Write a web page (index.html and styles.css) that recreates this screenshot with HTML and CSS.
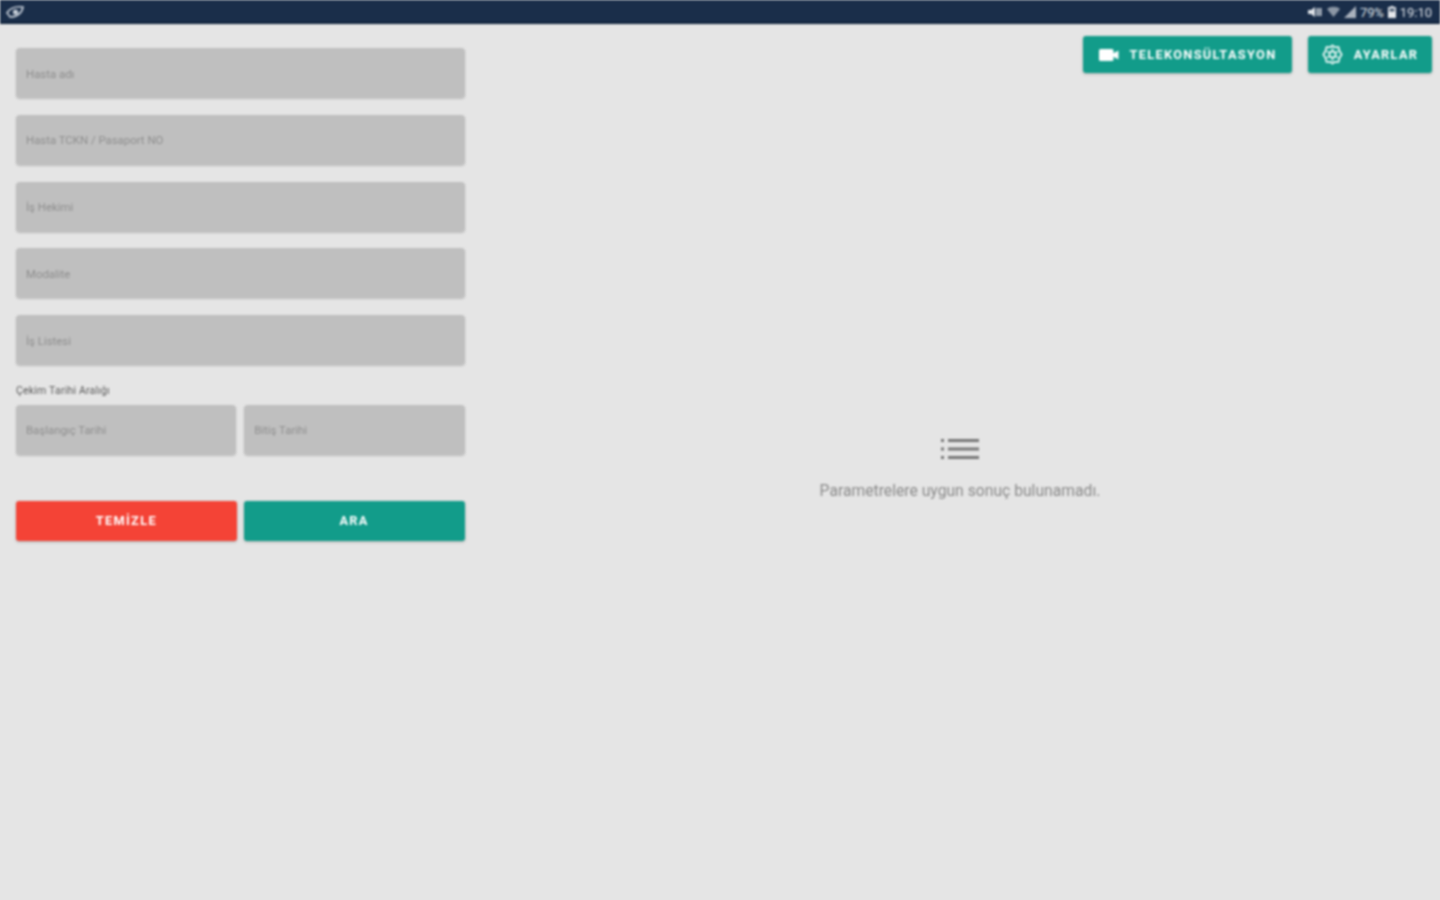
FILE: index.html
```html
<!DOCTYPE html>
<html lang="tr">
<head>
<meta charset="utf-8">
<title>Telekonsültasyon</title>
<link rel="stylesheet" href="styles.css">
</head>
<body>
<div class="app">
  <header class="statusbar">
    <svg class="status-left" viewBox="0 0 18 14" width="18" height="14"><path d="M1 8C4 3 9 1 17 2c-1 6-6 10-13 10C3 10 2 9 1 8z" fill="none" stroke="#c6ced8" stroke-width="1.600"/><circle cx="9.500" cy="7" r="2.600" fill="#c6ced8"/></svg>
    <div class="status-right">
      <svg viewBox="0 0 15 12" width="15" height="12"><path d="M1 4h3l4-3v10L4 8H1z" fill="#dfe3e8"/><path d="M10.500 2v8M13.500 2v8" stroke="#dfe3e8" stroke-width="1.800"/></svg>
      <svg class="wifi" viewBox="0 0 13 12" width="13" height="12"><path d="M0 3c3-3 10-3 13 0L6.500 11z" fill="#8c97a5"/></svg>
      <svg viewBox="0 0 12 12" width="12" height="12"><path d="M12 0v12H0z" fill="#aab2bd"/></svg>
      <span class="pct">79%</span>
      <svg viewBox="0 0 8 12" width="8" height="12"><path d="M2.500 0h3v1H8v11H0V1h2.500z" fill="#e6e9ed"/><rect x="1.500" y="2.500" width="5" height="3" fill="#4a5b70"/></svg>
      <span class="clock">19:10</span>
    </div>
  </header>
  <main class="main">
    <aside class="filters">
      <div class="field"><span>Hasta adı</span></div>
      <div class="field"><span>Hasta TCKN / Pasaport NO</span></div>
      <div class="field"><span>İş Hekimi</span></div>
      <div class="field"><span>Modalite</span></div>
      <div class="field"><span>İş Listesi</span></div>
      <div class="date-label">Çekim Tarihi Aralığı</div>
      <div class="date-row">
        <div class="field"><span>Başlangıç Tarihi</span></div>
        <div class="field"><span>Bitiş Tarihi</span></div>
      </div>
      <div class="actions">
        <button class="btn btn-red">TEMİZLE</button>
        <button class="btn btn-teal">ARA</button>
      </div>
    </aside>
    <section class="panel">
      <div class="toolbar">
        <button class="btn btn-teal tool tool-tele">
          <svg viewBox="0 0 20 14" width="20" height="14"><rect x="0" y="1" width="14.500" height="12" rx="1.500" fill="#fff"/><path d="M14 5.500 19.500 2.500v9L14 8.500z" fill="#fff"/></svg>
          TELEKONSÜLTASYON
        </button>
        <button class="btn btn-teal tool tool-set">
          <svg viewBox="0 0 24 24" width="21" height="21" fill="none" stroke="#fff" stroke-width="1.800" stroke-linejoin="round"><path d="M12 1.500 15 3.800 19 3.500 19.800 7.500 22.500 12 19.800 16.500 19 20.500 15 20.200 12 22.500 9 20.200 5 20.500 4.200 16.500 1.500 12 4.200 7.500 5 3.500 9 3.800z"/><circle cx="12" cy="12" r="3.600"/><path d="M12 8.400V4M15.100 13.800l3.900 2.200M8.900 13.800 5 16M8.900 10.200 5 8M15.100 10.200 19 8M12 15.600V20" stroke-width="1.200"/></svg>
          AYARLAR
        </button>
      </div>
      <div class="empty">
        <svg viewBox="0 0 38 22" width="38" height="22"><g fill="#777"><rect x="0" y="1" width="3" height="3"/><rect x="0" y="9.500" width="3" height="3"/><rect x="0" y="18" width="3" height="3"/><rect x="7" y="1" width="31" height="3"/><rect x="7" y="9.500" width="31" height="3"/><rect x="7" y="18" width="31" height="3"/></g></svg>
        <p>Parametrelere uygun sonuç bulunamadı.</p>
      </div>
    </section>
  </main>
</div>
</body>
</html>
```
FILE: styles.css
```css
* { box-sizing: border-box; }
html, body { margin: 0; height: 100%; }
body { background: #e5e5e5; font-family: Roboto, "Liberation Sans", sans-serif; overflow: hidden; }
.app { height: 900px; display: flex; flex-direction: column; filter: blur(0.85px); }
.statusbar {
  height: 24px; flex: none; background: #1a2e4a; border-bottom: 2px solid #10233c;
  display: flex; align-items: center; justify-content: space-between; padding: 2px 8px 0 6px;
}
.status-left { display: block; }
.status-right { display: flex; align-items: center; gap: 4px; color: #dfe3e8; font-size: 13px; }
.wifi { margin-left: 1px; }
.pct { letter-spacing: -.2px; }
.main { flex: 1; display: flex; min-height: 0; }
.filters { width: 480px; flex: none; padding: 24px 15.500px 0 16px; display: flex; flex-direction: column; }
.field {
  height: 50px; background: #bfbfbf; border-radius: 4px; display: flex; align-items: center;
  padding: 1px 10px 0; font-size: 11.400px; color: #8e8e8e; margin-bottom: 16.800px;
  box-shadow: 0 1px 2px rgba(0,0,0,.18);
}
.date-label { font-size: 10.500px; letter-spacing: .2px; color: #5a5a5a; margin-top: 1px; height: 16px; line-height: 16px; margin-bottom: 6px; }
.date-row { display: grid; grid-template-columns: 1fr 1fr; gap: 8px; }
.date-row .field { margin-bottom: 0; }
.actions { display: grid; grid-template-columns: 1fr 1fr; gap: 7px; margin-top: 46px; }
.btn {
  border: 0; border-radius: 3px; color: #fff; font-family: Roboto, "Liberation Sans", sans-serif;
  font-weight: 700; font-size: 12.800px; letter-spacing: 1.300px; height: 40px; padding: 0;
  box-shadow: 0 1px 3px rgba(0,0,0,.25);
}
.btn-red { background: #f44336; }
.btn-teal { background: #129c8a; }
.panel { flex: 1; display: grid; min-width: 0; }
.toolbar, .empty { grid-area: 1 / 1; }
.toolbar { justify-self: end; align-self: start; display: flex; gap: 16px; padding: 12px 8px 0 0; }
.tool { height: 37px; display: flex; align-items: center; justify-content: center; gap: 11px; }
.tool-tele { width: 209px; }
.tool-set { width: 124px; }
.empty { align-self: center; justify-self: center; display: flex; flex-direction: column; align-items: center; padding-top: 14px; }
.empty p { margin: 21px 0 0; font-size: 15.700px; color: #8a8a8a; line-height: 20px; }
```
